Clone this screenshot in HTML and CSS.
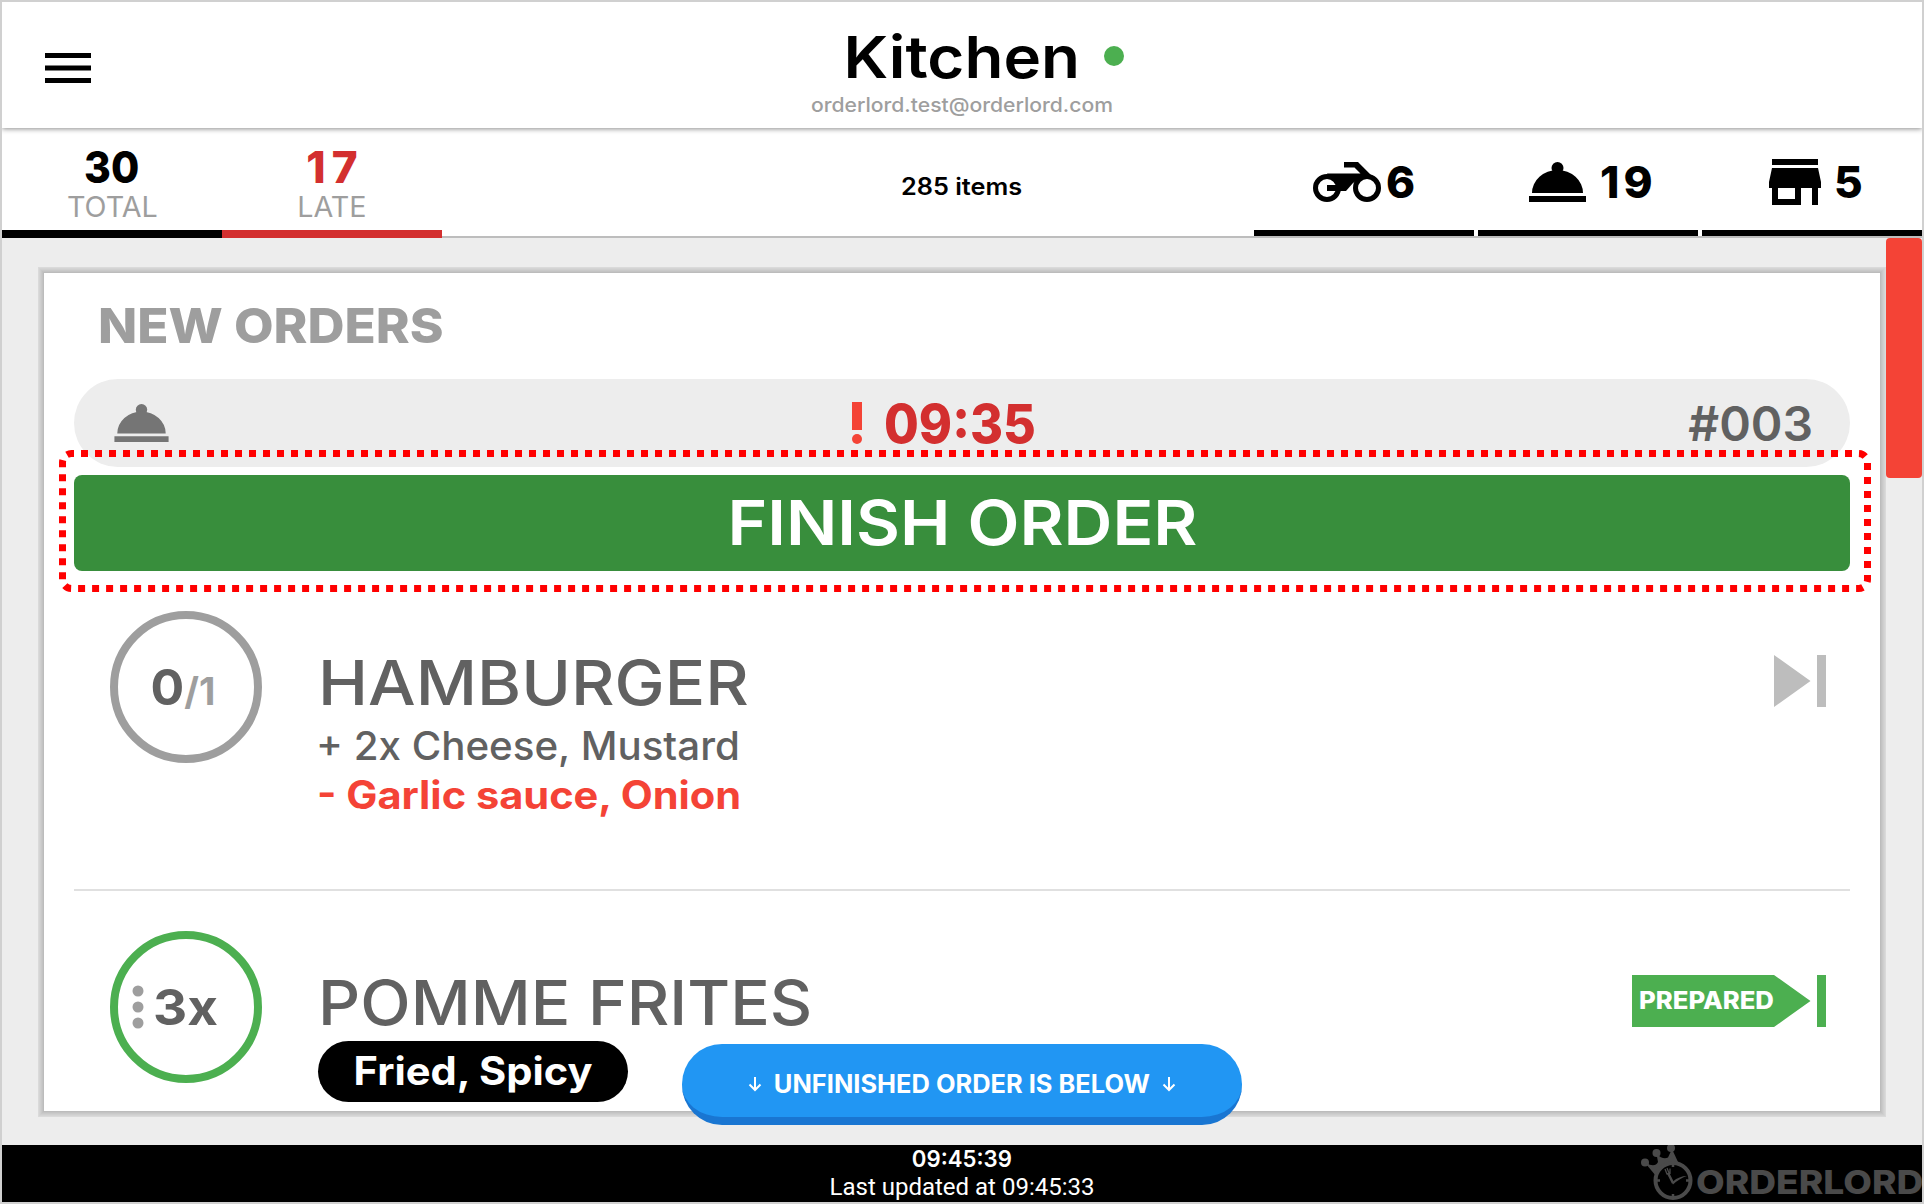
FILE: index.html
```html
<!DOCTYPE html>
<html lang="en">
<head>
<meta charset="utf-8">
<title>Kitchen</title>
<link rel="stylesheet" href="styles.css">
</head>
<body>
<svg class="defs" width="0" height="0">
  <symbol id="dish" viewBox="0 0 57 40"><circle cx="28.500" cy="6" r="6"/><path d="M3 31A25.500 23 0 0 1 54 31ZM0 34H57V40H0Z"/></symbol>
</svg>
<div class="app">
  <header class="header">
    <svg class="menu" width="46" height="31"><path d="M0 0H46V5H0ZM0 12.500H46V17.500H0ZM0 25H46V30H0Z"/></svg>
    <div class="titles">
      <h1 class="title"><span class="fit t-title">Kitchen</span><i class="online"></i></h1>
      <div class="account"><span class="fit t-account">orderlord.test@orderlord.com</span></div>
    </div>
  </header>
  <nav class="stats">
    <div class="stat total"><b><span class="fit t-30">30</span></b><small><span class="fit t-total">TOTAL</span></small></div>
    <div class="stat late"><b><span class="fit t-17">17</span></b><small><span class="fit t-late">LATE</span></small></div>
    <div class="items"><span class="fit t-items">285 items</span></div>
    <div class="types">
      <div class="type delivery"><svg width="69" height="40" viewBox="0 0 69 40"><path d="M14 11.500H54L40 21L33 29H24ZM31 0H45L59 14L53 17L41.500 5.500H31Z"/><g fill="#fff" stroke="#000" stroke-width="5"><circle cx="14" cy="26" r="11.500"/><circle cx="54" cy="26" r="11.500"/></g><path d="M14 23H28V29H14Z"/></svg><span>6</span></div>
      <div class="type dine-in"><svg width="57" height="40"><use href="#dish"/></svg><span class="t-19">19</span></div>
      <div class="type takeaway"><svg width="52" height="46" viewBox="0 0 52 46"><path d="M3 0H49V6H3ZM3 9H49L52 23V29H49V46H43V29H32V46H3V29H0V23ZM9 29V40H26V29Z" fill-rule="evenodd"/></svg><span>5</span></div>
    </div>
  </nav>
  <main class="board">
    <section class="sheet">
      <h2 class="heading"><span class="fit t-new">NEW ORDERS</span></h2>
      <div class="order-bar">
        <svg class="order-type" width="55" height="38"><use href="#dish"/></svg>
        <div class="due"><svg width="10" height="42"><path d="M0 0H10V28H0Z"/><circle cx="5" cy="37" r="5"/></svg><span class="fit t-due">09:35</span></div>
        <div class="number"><span class="fit">#003</span></div>
      </div>
      <div class="finish"><span class="fit t-finish">FINISH ORDER</span>
        <svg class="marker" width="1812" height="142"><rect x="3.500" y="3.500" width="1805" height="135" rx="9"/></svg>
      </div>
      <article class="item">
        <div class="count partial"><span>0<span class="of">/1</span></span></div>
        <div class="detail">
          <h3><span class="fit t-ham">HAMBURGER</span></h3>
          <p class="plus"><span class="fit t-plus">+ 2x Cheese, Mustard</span></p>
          <p class="minus"><span class="fit t-minus">- Garlic sauce, Onion</span></p>
        </div>
        <svg class="skip" width="52" height="52"><path d="M0 0L36.500 26L0 52ZM43 0H52V52H43Z"/></svg>
      </article>
      <article class="item second">
        <div class="count green"><svg class="dots" width="12" height="44"><circle cx="6" cy="6" r="5.500"/><circle cx="6" cy="22" r="5.500"/><circle cx="6" cy="38" r="5.500"/></svg><span class="fit t-three">3x</span></div>
        <div class="detail">
          <h3><span class="fit t-pom">POMME FRITES</span></h3>
          <p class="tag"><span class="fit t-tag">Fried, Spicy</span></p>
        </div>
        <div class="prepared"><span class="fit t-prep">PREPARED</span></div>
      </article>
    </section>
    <div class="scroll-thumb"></div>
    <div class="below">
      <svg width="14" height="16"><path d="M7 1V14M1.500 8.500L7 14L12.500 8.500"/></svg>
      <span class="fit t-below">UNFINISHED ORDER IS BELOW</span>
      <svg width="14" height="16"><path d="M7 1V14M1.500 8.500L7 14L12.500 8.500"/></svg>
    </div>
  </main>
  <footer class="footer">
    <div class="clock"><span class="fit t-clock">09:45:39</span></div>
    <div class="updated">Last updated at 09:45:33</div>
    <div class="brand"><svg width="53" height="56" viewBox="0 0 53 56"><g fill="#4a4a4a"><circle cx="4" cy="17.500" r="4"/><circle cx="15.500" cy="8" r="4"/><circle cx="30" cy="3" r="4"/><path d="M5 19L15 31Q22 19 37 17L31 4L27 12.500Q22 15 15.500 9L17 17Q14 23 5 18Z"/></g><circle cx="32" cy="35.500" r="17.500" fill="#000" stroke="#4a4a4a" stroke-width="4"/><g fill="none" stroke="#4a4a4a"><path d="M32 18V22M32 49V53M15 35.500H19M45 35.500H49M27 28L32 38" stroke-width="2.500"/><path d="M24 24L26 29L29 28.500L29 23.500M26 23L28 28" stroke-width="1.300"/></g><path d="M30 36L32 36.500Q38 31 46 31Q39 33 32 39.500Z" fill="#4a4a4a"/></svg><span class="fit t-brand">ORDERLORD</span></div>
  </footer>
</div>
</body>
</html>
```
FILE: styles.css
```css
* { box-sizing: border-box; margin: 0; padding: 0; }
body { font-family: Inter, "Liberation Sans", sans-serif; color: #000; }
.defs { position: absolute; }
svg { display: block; flex: none; }
.app { width: 1924px; height: 1204px; border: 2px solid #d0d0d0; background: #ededed; display: flex; flex-direction: column; overflow: hidden; }

/* Widened lettering */
.fit { display: inline-block; white-space: nowrap; }
.t-title { transform: scaleX(1.098); }
.t-account { transform: scaleX(1.056); }
.t-30 { transform: scaleX(.93); }
.t-17 { letter-spacing: 6px; margin-right: -6px; }
.t-total, .t-late { transform: scaleX(1.025); }
.t-items { transform: scaleX(1.054); transform-origin: left; }
.t-19 { letter-spacing: 4px; }
.t-new { transform: scaleX(1.068); transform-origin: left; }
.t-due { transform: scaleX(.933); transform-origin: left; }
.t-finish { transform: scaleX(1.091); }
.t-ham { transform: scaleX(1.084); transform-origin: left; }
.t-plus { transform: scaleX(1.033); transform-origin: left; }
.t-minus { transform: scaleX(1.065); transform-origin: left; }
.t-three { transform: scaleX(1.06); transform-origin: left; }
.t-pom { transform: scaleX(1.061); transform-origin: left; }
.t-tag { transform: scaleX(1.066); }
.t-prep { transform: scaleX(1.07); transform-origin: left; }
.t-below { transform: scaleX(1.017); }
.t-clock { transform: scaleX(.965); }
.t-brand { transform: scaleX(1.125); transform-origin: left; }

.header { height: 126px; background: #fff; position: relative; display: flex; justify-content: center; flex: none; z-index: 1; box-shadow: 0 1px 5px rgba(0,0,0,.45); }
.menu { position: absolute; left: 43px; top: 51px; }
.titles { text-align: center; width: 400px; }
.title { font-size: 58px; line-height: 70px; font-weight: 600; padding-top: 20px; height: 91px; position: relative; }
.online { position: absolute; width: 20px; height: 20px; border-radius: 50%; background: #4caf50; left: 342px; top: 44px; }
.account { font-size: 20px; line-height: 24px; font-weight: 500; color: #9e9e9e; }
.stats { height: 110px; flex: none; background: #fff; border-bottom: 2px solid #bdbdbd; display: flex; }
.stat { width: 220px; height: 110px; padding-top: 19px; border-bottom: 8px solid #000; text-align: center; }
.stat b { display: block; font-size: 44px; line-height: 40px; font-weight: 800; }
.stat small { display: block; font-size: 28px; line-height: 40px; color: #9e9e9e; }
.late { border-color: #d32f2f; }
.late b { color: #d32f2f; }
.items { flex: 1; padding: 45px 0 0 459px; font-size: 24px; line-height: 28px; font-weight: 600; }
.types { display: flex; gap: 4px; }
.type { width: 220px; height: 108px; padding-top: 6px; border-bottom: 6px solid #000; display: flex; align-items: center; font-size: 44px; font-weight: 800; }
.delivery { padding-left: 59px; gap: 4px; }
.dine-in { padding-left: 51px; gap: 14px; }
.takeaway { padding-left: 67px; gap: 13px; }

.board { flex: 1; position: relative; padding: 35px 42px 34px; }
.sheet { height: 838px; background: #fff; padding: 0 30px; box-shadow: 0 0 0 1px #bcbcbc, 0 0 0 2px #c3c3c3, 0 0 0 3px #c9c9c9, 0 0 0 4px #cfcfcf, 0 0 0 5px #d4d4d4, 0 0 0 6px #dadada; }
.heading { height: 106px; padding: 28px 0 0 24px; font-size: 48px; line-height: 50px; font-weight: 800; color: #9e9e9e; }
.order-bar { height: 88px; border-radius: 44px; background: #ededed; display: grid; grid-template-columns: 1fr 220px 1fr; align-items: center; padding: 0 40px; }
.order-type { fill: #757575; }
.due { display: flex; align-items: center; gap: 22px; color: #d32f2f; font-size: 54px; font-weight: 800; }
.due svg { fill: #f44336; }
.number { text-align: right; font-size: 48px; font-weight: 600; color: #616161; margin-right: -3px; }
.finish { margin-top: 8px; height: 96px; border-radius: 8px; background: #388e3c; color: #fff; font-size: 62px; font-weight: 600; display: flex; align-items: center; justify-content: center; position: relative; padding-bottom: 2px; }
.marker { position: absolute; left: -15px; top: -25px; fill: none; stroke: #f00; stroke-width: 7; stroke-dasharray: 7 7; stroke-dashoffset: 4.5px; }

.item { height: 320px; border-bottom: 2px solid #e0e0e0; display: flex; padding: 40px 24px 0 36px; }
.second { border: 0; height: 220px; }
.count { width: 152px; height: 152px; border: 8px solid #9e9e9e; border-radius: 50%; display: flex; align-items: center; justify-content: center; color: #616161; font-size: 50px; font-weight: 700; flex: none; }
.partial { padding-right: 6px; }
.of { color: #9e9e9e; font-size: 38px; }
.green { border-color: #4caf50; justify-content: flex-start; padding-left: 14px; }
.dots { fill: #9e9e9e; margin-right: 9px; }
.detail { margin-left: 56px; flex: 1; padding-top: 34px; color: #616161; }
.detail h3 { font-size: 62px; line-height: 76px; font-weight: 500; }
.detail p { font-size: 39px; line-height: 49px; font-weight: 500; }
.detail .plus { margin-left: -2px; }
.detail .minus { font-weight: 700; color: #f44336; margin-left: -1px; }
.detail .tag { width: 310px; height: 61px; line-height: 60px; border-radius: 31px; background: #000; color: #fff; font-weight: 700; text-align: center; }
.skip { fill: #bdbdbd; margin-top: 44px; }
.prepared { width: 194px; height: 52px; margin-top: 44px; flex: none; color: #fff; background: #4caf50; clip-path: polygon(0 0, 142px 0, 178.5px 26px, 142px 52px, 0 52px, 0 0, 185px 0, 194px 0, 194px 52px, 185px 52px, 185px 0); font-size: 24px; font-weight: 800; line-height: 51px; padding-left: 7px; }
.scroll-thumb { position: absolute; right: 0; top: 0; width: 36px; height: 240px; border-radius: 4px; background: #f44336; }
.below { position: absolute; left: 680px; top: 806px; width: 560px; height: 81px; border-radius: 40px; background: #2196f3; border-bottom: 8px solid #1976d2; color: #fff; display: flex; align-items: center; justify-content: center; gap: 15px; padding-top: 6px; font-size: 25px; font-weight: 700; }
.below svg { fill: none; stroke: #fff; stroke-width: 2; }

.footer { height: 57px; flex: none; background: #000; color: #fff; text-align: center; position: relative; }
.clock { font-size: 23px; line-height: 28px; font-weight: 600; }
.updated { font: 24px/28px Roboto, sans-serif; }
.brand { position: absolute; left: 1639px; top: 0; display: flex; color: #4a4a4a; font-size: 33px; line-height: 40px; font-weight: 800; gap: 2px; }
.t-brand { padding-top: 17px; }
```
